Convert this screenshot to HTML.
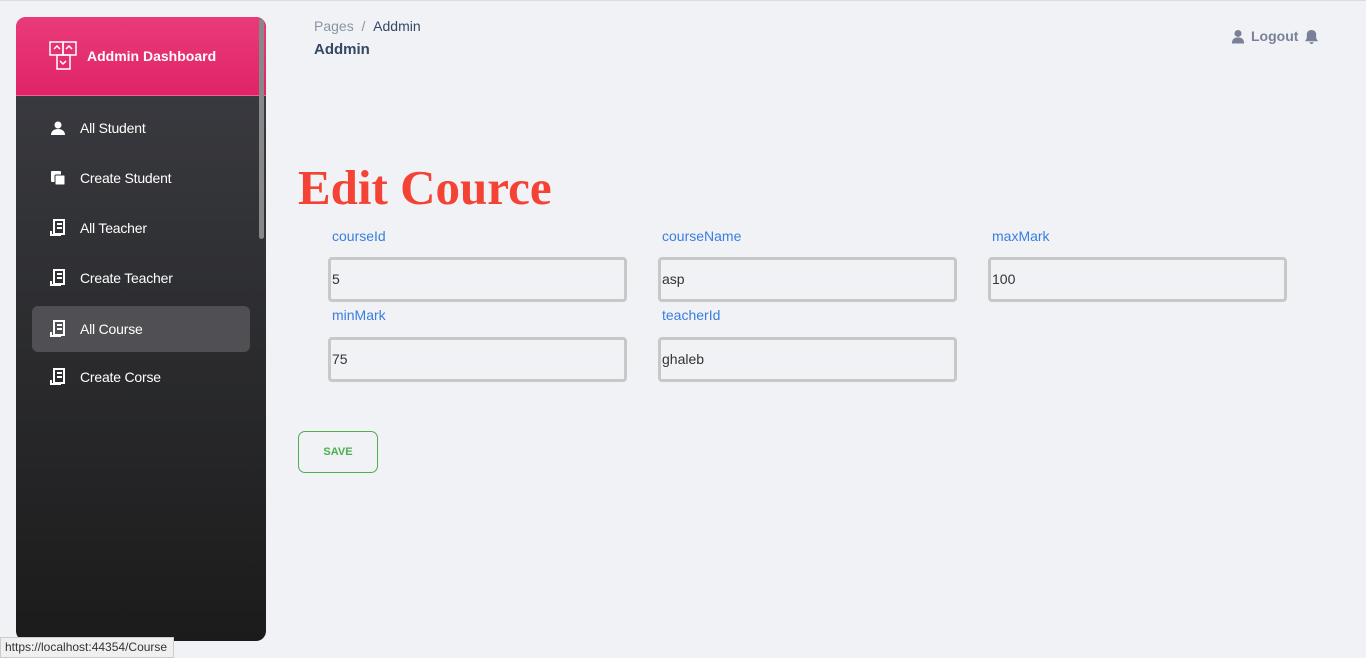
<!DOCTYPE html>
<html><head><style>
*{box-sizing:border-box;margin:0;padding:0}
body{width:1366px;height:658px;background:#f0f2f5;font-family:"Liberation Sans",sans-serif;position:relative;overflow:hidden}
.tl{position:absolute;left:0;top:0;width:1366px;height:1px;background:#dcdde2}
.side{position:absolute;left:16px;top:17px;width:250px;height:624px;border-radius:10px;background:linear-gradient(#3d3e44,#1b1b1b);overflow:hidden}
.head{height:79px;background:linear-gradient(#ea3a79,#df2468);border-bottom:1px solid #f06292;display:flex;align-items:center;padding-left:33px;color:#fff;font-weight:bold;font-size:14px}
.head svg{margin-right:10px}
.scroll{position:absolute;right:2px;top:2px;width:5px;height:220px;background:#888;border-radius:3px}
.item{position:absolute;left:16px;width:218px;height:46px;display:flex;align-items:center;padding-left:18px;color:#fff;font-size:14px;letter-spacing:-0.2px}
.item.act{background:#505054;border-radius:6px}
.item svg{margin-right:14px}
.bc{position:absolute;left:314px;top:18px;font-size:14px;color:#8a93a6}
.bc b{color:#344767;font-weight:normal}
.ttl{position:absolute;left:314px;top:41px;font-size:15px;font-weight:bold;color:#344767}
.lg{position:absolute;left:1231px;top:28px;font-size:14px;font-weight:bold;color:#7b809a;display:flex;align-items:center;gap:6px}
h1{position:absolute;left:298px;top:159px;font-family:"Liberation Serif",serif;font-size:49px;color:#f44335;font-weight:bold}
.lab{position:absolute;font-size:14px;color:#3a7de0}
.in{position:absolute;width:299px;height:45px;border:3px solid #c8c8c8;border-radius:4px;background:#f0f2f5;font-size:14px;color:#333;padding-left:1px;line-height:39px}
.btn{position:absolute;left:298px;top:431px;width:80px;height:42px;border:1px solid #4caf50;border-radius:7px;color:#4caf50;font-size:11px;font-weight:bold;text-align:center;line-height:40px}
.url{position:absolute;left:0;top:637px;width:174px;height:21px;background:#f0f0f0;border:1px solid #ccc;font-size:12px;color:#333;line-height:19px;padding-left:4px}
</style></head><body>
<div class="tl"></div>
<div class="side">
<div class="head"><svg width="28" height="30" viewBox="0 0 28 30" fill="none" stroke="#fff" stroke-width="1.5"><rect x="1" y="1" width="13" height="13"/><rect x="14" y="1" width="13" height="13"/><rect x="8" y="14" width="13" height="14"/><path d="M5 8l3-3 3 3M17 8l3-3 3 3M11 20l3 3 3-3"/></svg>Addmin Dashboard</div>
<div class="scroll"></div>
<div class="item" style="top:88px"><svg width="16" height="16" viewBox="0 0 16 16" fill="#fff"><circle cx="8" cy="5" r="3.5"/><path d="M1 15c0-4 3-6 7-6s7 2 7 6z"/></svg>All Student</div>
<div class="item" style="top:138px"><svg width="16" height="16" viewBox="0 0 16 16" fill="#fff"><rect x="1" y="1" width="10" height="11" rx="1"/><rect x="5" y="5" width="10" height="10" rx="1" stroke="#333" stroke-width="1"/></svg>Create Student</div>
<div class="item" style="top:188px"><svg width="16" height="18" viewBox="0 0 16 18" fill="none" stroke="#fff" stroke-width="2"><path d="M4 1h10v14H4zM1 12v4h10M7 5h5M7 9h5"/></svg>All Teacher</div>
<div class="item" style="top:238px"><svg width="16" height="18" viewBox="0 0 16 18" fill="none" stroke="#fff" stroke-width="2"><path d="M4 1h10v14H4zM1 12v4h10M7 5h5M7 9h5"/></svg>Create Teacher</div>
<div class="item act" style="top:289px"><svg width="16" height="18" viewBox="0 0 16 18" fill="none" stroke="#fff" stroke-width="2"><path d="M4 1h10v14H4zM1 12v4h10M7 5h5M7 9h5"/></svg>All Course</div>
<div class="item" style="top:337px"><svg width="16" height="18" viewBox="0 0 16 18" fill="none" stroke="#fff" stroke-width="2"><path d="M4 1h10v14H4zM1 12v4h10M7 5h5M7 9h5"/></svg>Create Corse</div>
</div>
<div class="bc">Pages &nbsp;/ &nbsp;<b>Addmin</b></div>
<div class="ttl">Addmin</div>
<div class="lg"><svg width="14" height="15" viewBox="0 0 16 16" fill="#7b809a"><circle cx="8" cy="4.5" r="4"/><path d="M1 16c0-5 3-7 7-7s7 2 7 7z"/></svg>Logout <svg width="15" height="15" viewBox="0 0 16 16" fill="#7b809a"><path d="M8 1c3 0 5 2 5 5v4l2 3H1l2-3V6c0-3 2-5 5-5zM6 14h4a2 2 0 01-4 0z"/></svg></div>
<h1>Edit Cource</h1>
<div class="lab" style="left:332px;top:228px">courseId</div>
<div class="lab" style="left:662px;top:228px">courseName</div>
<div class="lab" style="left:992px;top:228px">maxMark</div>
<div class="in" style="left:328px;top:257px">5</div>
<div class="in" style="left:658px;top:257px">asp</div>
<div class="in" style="left:988px;top:257px">100</div>
<div class="lab" style="left:332px;top:307px">minMark</div>
<div class="lab" style="left:662px;top:307px">teacherId</div>
<div class="in" style="left:328px;top:337px">75</div>
<div class="in" style="left:658px;top:337px">ghaleb</div>
<div class="btn">SAVE</div>
<div class="url">https://localhost:44354/Course</div>
</body></html>
